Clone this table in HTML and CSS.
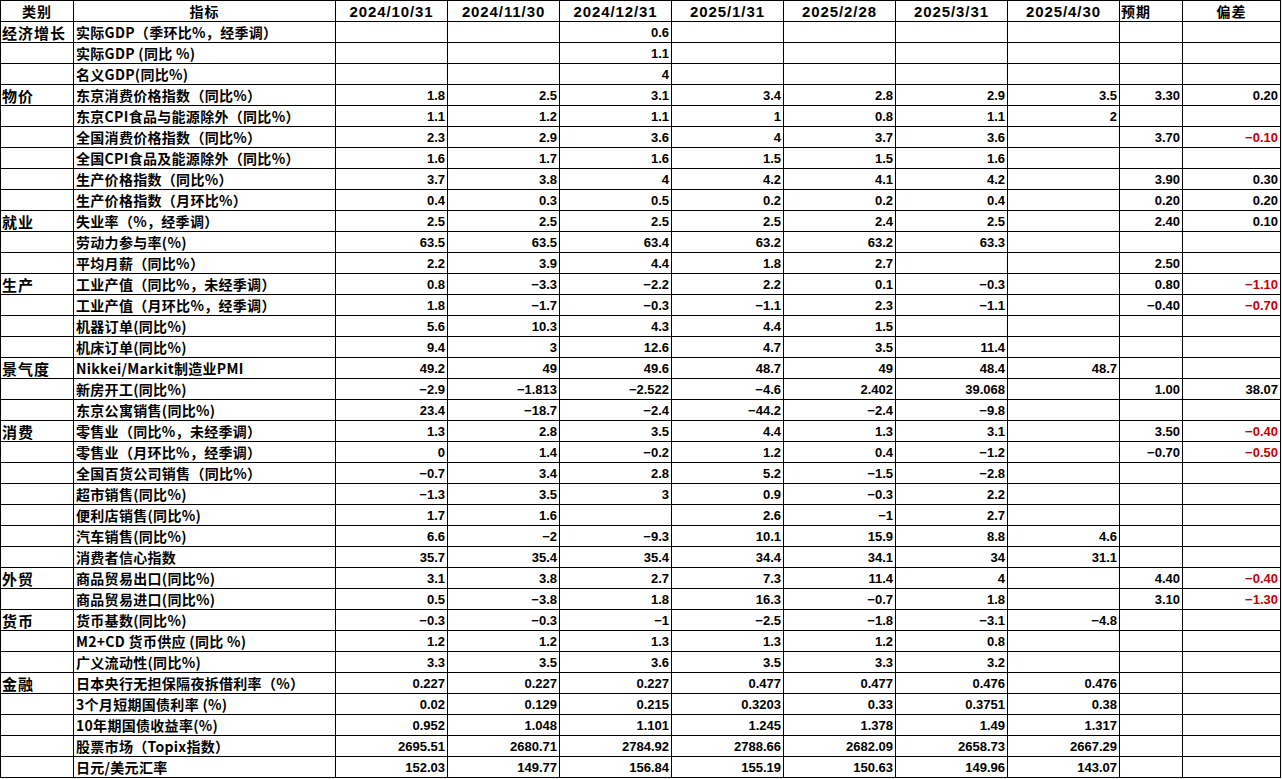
FILE: index.html
```html
<!DOCTYPE html>
<html lang="zh-CN">
<head>
<meta charset="utf-8">
<title>日本经济数据</title>
<link rel="stylesheet" href="styles.css">
</head>
<body>
<table class="sheet">
<colgroup>
<col class="c-cat"><col class="c-ind">
<col class="c-d"><col class="c-d"><col class="c-d"><col class="c-d"><col class="c-d"><col class="c-d"><col class="c-d">
<col class="c-exp"><col class="c-dev">
</colgroup>
<thead>
<tr><th class="cjk">类别</th><th class="cjk">指标</th><th class="date">2024/10/31</th><th class="date">2024/11/30</th><th class="date">2024/12/31</th><th class="date">2025/1/31</th><th class="date">2025/2/28</th><th class="date">2025/3/31</th><th class="date">2025/4/30</th><th class="cjk left">预期</th><th class="cjk">偏差</th></tr>
</thead>
<tbody>
<tr><td class="cat">经济增长</td><td class="ind">实际GDP（季环比%，经季调）</td><td></td><td></td><td>0.6</td><td></td><td></td><td></td><td></td><td></td><td></td></tr>
<tr><td class="cat"></td><td class="ind">实际GDP (同比 %)</td><td></td><td></td><td>1.1</td><td></td><td></td><td></td><td></td><td></td><td></td></tr>
<tr><td class="cat"></td><td class="ind">名义GDP(同比%)</td><td></td><td></td><td>4</td><td></td><td></td><td></td><td></td><td></td><td></td></tr>
<tr><td class="cat">物价</td><td class="ind">东京消费价格指数（同比%）</td><td>1.8</td><td>2.5</td><td>3.1</td><td>3.4</td><td>2.8</td><td>2.9</td><td>3.5</td><td>3.30</td><td>0.20</td></tr>
<tr><td class="cat"></td><td class="ind">东京CPI食品与能源除外（同比%）</td><td>1.1</td><td>1.2</td><td>1.1</td><td>1</td><td>0.8</td><td>1.1</td><td>2</td><td></td><td></td></tr>
<tr><td class="cat"></td><td class="ind">全国消费价格指数（同比%）</td><td>2.3</td><td>2.9</td><td>3.6</td><td>4</td><td>3.7</td><td>3.6</td><td></td><td>3.70</td><td class="neg">−0.10</td></tr>
<tr><td class="cat"></td><td class="ind">全国CPI食品及能源除外（同比%）</td><td>1.6</td><td>1.7</td><td>1.6</td><td>1.5</td><td>1.5</td><td>1.6</td><td></td><td></td><td></td></tr>
<tr><td class="cat"></td><td class="ind">生产价格指数（同比%）</td><td>3.7</td><td>3.8</td><td>4</td><td>4.2</td><td>4.1</td><td>4.2</td><td></td><td>3.90</td><td>0.30</td></tr>
<tr><td class="cat"></td><td class="ind">生产价格指数（月环比%）</td><td>0.4</td><td>0.3</td><td>0.5</td><td>0.2</td><td>0.2</td><td>0.4</td><td></td><td>0.20</td><td>0.20</td></tr>
<tr><td class="cat">就业</td><td class="ind">失业率（%，经季调）</td><td>2.5</td><td>2.5</td><td>2.5</td><td>2.5</td><td>2.4</td><td>2.5</td><td></td><td>2.40</td><td>0.10</td></tr>
<tr><td class="cat"></td><td class="ind">劳动力参与率(%)</td><td>63.5</td><td>63.5</td><td>63.4</td><td>63.2</td><td>63.2</td><td>63.3</td><td></td><td></td><td></td></tr>
<tr><td class="cat"></td><td class="ind">平均月薪（同比%）</td><td>2.2</td><td>3.9</td><td>4.4</td><td>1.8</td><td>2.7</td><td></td><td></td><td>2.50</td><td></td></tr>
<tr><td class="cat">生产</td><td class="ind">工业产值（同比%，未经季调）</td><td>0.8</td><td>−3.3</td><td>−2.2</td><td>2.2</td><td>0.1</td><td>−0.3</td><td></td><td>0.80</td><td class="neg">−1.10</td></tr>
<tr><td class="cat"></td><td class="ind">工业产值（月环比%，经季调）</td><td>1.8</td><td>−1.7</td><td>−0.3</td><td>−1.1</td><td>2.3</td><td>−1.1</td><td></td><td>−0.40</td><td class="neg">−0.70</td></tr>
<tr><td class="cat"></td><td class="ind">机器订单(同比%)</td><td>5.6</td><td>10.3</td><td>4.3</td><td>4.4</td><td>1.5</td><td></td><td></td><td></td><td></td></tr>
<tr><td class="cat"></td><td class="ind">机床订单(同比%)</td><td>9.4</td><td>3</td><td>12.6</td><td>4.7</td><td>3.5</td><td>11.4</td><td></td><td></td><td></td></tr>
<tr><td class="cat">景气度</td><td class="ind">Nikkei/Markit制造业PMI</td><td>49.2</td><td>49</td><td>49.6</td><td>48.7</td><td>49</td><td>48.4</td><td>48.7</td><td></td><td></td></tr>
<tr><td class="cat"></td><td class="ind">新房开工(同比%)</td><td>−2.9</td><td>−1.813</td><td>−2.522</td><td>−4.6</td><td>2.402</td><td>39.068</td><td></td><td>1.00</td><td>38.07</td></tr>
<tr><td class="cat"></td><td class="ind">东京公寓销售(同比%)</td><td>23.4</td><td>−18.7</td><td>−2.4</td><td>−44.2</td><td>−2.4</td><td>−9.8</td><td></td><td></td><td></td></tr>
<tr><td class="cat">消费</td><td class="ind">零售业（同比%，未经季调）</td><td>1.3</td><td>2.8</td><td>3.5</td><td>4.4</td><td>1.3</td><td>3.1</td><td></td><td>3.50</td><td class="neg">−0.40</td></tr>
<tr><td class="cat"></td><td class="ind">零售业（月环比%，经季调）</td><td>0</td><td>1.4</td><td>−0.2</td><td>1.2</td><td>0.4</td><td>−1.2</td><td></td><td>−0.70</td><td class="neg">−0.50</td></tr>
<tr><td class="cat"></td><td class="ind">全国百货公司销售（同比%）</td><td>−0.7</td><td>3.4</td><td>2.8</td><td>5.2</td><td>−1.5</td><td>−2.8</td><td></td><td></td><td></td></tr>
<tr><td class="cat"></td><td class="ind">超市销售(同比%)</td><td>−1.3</td><td>3.5</td><td>3</td><td>0.9</td><td>−0.3</td><td>2.2</td><td></td><td></td><td></td></tr>
<tr><td class="cat"></td><td class="ind">便利店销售(同比%)</td><td>1.7</td><td>1.6</td><td></td><td>2.6</td><td>−1</td><td>2.7</td><td></td><td></td><td></td></tr>
<tr><td class="cat"></td><td class="ind">汽车销售(同比%)</td><td>6.6</td><td>−2</td><td>−9.3</td><td>10.1</td><td>15.9</td><td>8.8</td><td>4.6</td><td></td><td></td></tr>
<tr><td class="cat"></td><td class="ind">消费者信心指数</td><td>35.7</td><td>35.4</td><td>35.4</td><td>34.4</td><td>34.1</td><td>34</td><td>31.1</td><td></td><td></td></tr>
<tr><td class="cat">外贸</td><td class="ind">商品贸易出口(同比%)</td><td>3.1</td><td>3.8</td><td>2.7</td><td>7.3</td><td>11.4</td><td>4</td><td></td><td>4.40</td><td class="neg">−0.40</td></tr>
<tr><td class="cat"></td><td class="ind">商品贸易进口(同比%)</td><td>0.5</td><td>−3.8</td><td>1.8</td><td>16.3</td><td>−0.7</td><td>1.8</td><td></td><td>3.10</td><td class="neg">−1.30</td></tr>
<tr><td class="cat">货币</td><td class="ind">货币基数(同比%)</td><td>−0.3</td><td>−0.3</td><td>−1</td><td>−2.5</td><td>−1.8</td><td>−3.1</td><td>−4.8</td><td></td><td></td></tr>
<tr><td class="cat"></td><td class="ind">M2+CD 货币供应 (同比 %)</td><td>1.2</td><td>1.2</td><td>1.3</td><td>1.3</td><td>1.2</td><td>0.8</td><td></td><td></td><td></td></tr>
<tr><td class="cat"></td><td class="ind">广义流动性(同比%)</td><td>3.3</td><td>3.5</td><td>3.6</td><td>3.5</td><td>3.3</td><td>3.2</td><td></td><td></td><td></td></tr>
<tr><td class="cat">金融</td><td class="ind">日本央行无担保隔夜拆借利率（%）</td><td>0.227</td><td>0.227</td><td>0.227</td><td>0.477</td><td>0.477</td><td>0.476</td><td>0.476</td><td></td><td></td></tr>
<tr><td class="cat"></td><td class="ind">3个月短期国债利率 (%)</td><td>0.02</td><td>0.129</td><td>0.215</td><td>0.3203</td><td>0.33</td><td>0.3751</td><td>0.38</td><td></td><td></td></tr>
<tr><td class="cat"></td><td class="ind">10年期国债收益率(%)</td><td>0.952</td><td>1.048</td><td>1.101</td><td>1.245</td><td>1.378</td><td>1.49</td><td>1.317</td><td></td><td></td></tr>
<tr><td class="cat"></td><td class="ind">股票市场（Topix指数）</td><td>2695.51</td><td>2680.71</td><td>2784.92</td><td>2788.66</td><td>2682.09</td><td>2658.73</td><td>2667.29</td><td></td><td></td></tr>
<tr><td class="cat"></td><td class="ind">日元/美元汇率</td><td>152.03</td><td>149.77</td><td>156.84</td><td>155.19</td><td>150.63</td><td>149.96</td><td>143.07</td><td></td><td></td></tr>
</tbody>
</table>
</body>
</html>
```

FILE: styles.css
```css
html, body {
  margin: 0;
  padding: 0;
  background: #ffffff;
}

body {
  font-family: "Liberation Sans", "Noto Sans CJK SC", sans-serif;
  font-weight: bold;
  font-size: 13px;
  color: #000000;
}

.sheet {
  border-collapse: collapse;
  table-layout: fixed;
  width: 1281px;
}

.c-cat { width: 73px; }
.c-ind { width: 262px; }
.c-d { width: 112px; }
.c-exp { width: 63px; }
.c-dev { width: 98px; }

.sheet th,
.sheet td {
  border: 1px solid #000000;
  height: 21px;
  padding: 0 2px 1px 2px;
  box-sizing: border-box;
  line-height: 17px;
  vertical-align: bottom;
  white-space: nowrap;
  overflow: hidden;
  text-align: right;
}

.sheet th {
  text-align: center;
  font-weight: bold;
}

.sheet th.date {
  font-size: 15px;
  letter-spacing: 0.9px;
}

.sheet th.cjk {
  font-family: "Noto Sans CJK SC", "Liberation Sans", sans-serif;
  font-size: 14px;
  letter-spacing: 1px;
}

.sheet th.left {
  text-align: left;
  padding-left: 1px;
}

.sheet td.cat,
.sheet td.ind {
  text-align: left;
  font-family: "Noto Sans CJK SC", "Liberation Sans", sans-serif;
  font-size: 14px;
  letter-spacing: 0.3px;
}

.sheet td.cat {
  padding-left: 1px;
  font-size: 15px;
  letter-spacing: 1px;
}

.sheet td.neg {
  color: #c80000;
}
```
